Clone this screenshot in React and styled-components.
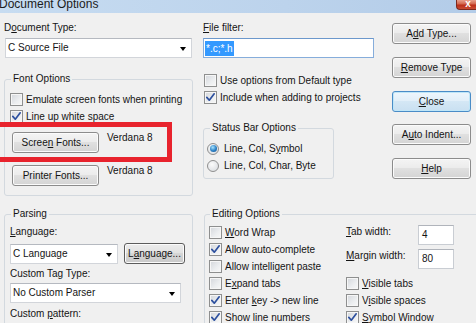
import React from 'react';
import styled, { createGlobalStyle, css } from 'styled-components';

const GlobalStyle = createGlobalStyle`
  *, *::before, *::after { box-sizing: border-box; }
  html, body { margin: 0; padding: 0; background: #f0f0f0; }
  body {
    font-family: "Liberation Sans", Arial, sans-serif;
    font-size: 10px;
    color: #141414;
  }
  #root { width: 476px; height: 323px; overflow: hidden; }
`;

const Window = styled.div`
  position: relative;
  width: 476px;
  height: 323px;
  overflow: hidden;
  background: #f0f0f0;
  display: flex;
  flex-direction: column;
`;

const TitleBar = styled.div`
  flex: none;
  height: 13px;
  display: flex;
  justify-content: space-between;
  align-items: flex-start;
  background: linear-gradient(to right, #c7dcf1, #bcd3ec 60%, #b3cce8);
`;

const Title = styled.div`
  font-size: 12px;
  line-height: 12px;
  margin-top: -2px;
  margin-left: -1px;
  color: #1c1c1c;
`;

const CloseButton = styled.div`
  width: 20px;
  height: 10px;
  border: 1px solid #7d2a1e;
  border-top: none;
  border-right: none;
  border-radius: 0 0 0 4px;
  background: linear-gradient(#e8a08c, #d2664d 45%, #bb2f18 55%, #c94c33);
  color: #fff;
  font-size: 10px;
  font-weight: bold;
  line-height: 8px;
  text-align: center;
  padding-left: 3px;
`;

const Body = styled.div`
  flex: 1;
  padding: 9px 0 0 4px;
  display: flex;
  flex-direction: column;
`;

const TopSection = styled.div`
  display: flex;
  align-items: flex-start;
`;

const Column = styled.div`
  flex: none;
  width: ${(p) => p.$w}px;
  margin-left: ${(p) => p.$ml || 0}px;
  margin-top: ${(p) => p.$mt || 0}px;
  display: flex;
  flex-direction: column;
`;

const Label = styled.div`
  line-height: 12px;
  white-space: nowrap;
  margin-top: ${(p) => p.$mt || 0}px;
  margin-left: ${(p) => p.$ml || 0}px;
`;

const Mn = styled.span`
  text-decoration: underline;
  text-underline-offset: 1px;
`;

const Select = styled.div`
  flex: none;
  width: ${(p) => p.$w}px;
  height: 20px;
  margin-top: ${(p) => p.$mt || 0}px;
  margin-left: ${(p) => p.$ml || 0}px;
  background: #fff;
  border: 1px solid #d2d5da;
  border-top-color: #b5b9c0;
  display: flex;
  align-items: center;
  justify-content: space-between;
  padding: 0 5px 0 2px;
  line-height: 12px;
  white-space: nowrap;
`;

const Arrow = styled.span`
  width: 0;
  height: 0;
  margin-top: 2px;
  border-left: 3.5px solid transparent;
  border-right: 3.5px solid transparent;
  border-top: 4px solid #000;
`;

const TextInput = styled.div`
  flex: none;
  width: ${(p) => p.$w}px;
  height: 20px;
  margin-top: ${(p) => p.$mt || 0}px;
  background: #fff;
  border: 1px solid ${(p) => (p.$focus ? '#86addb' : '#c9cdd3')};
  border-top-color: ${(p) => (p.$focus ? '#6c98cc' : '#b0b4bb')};
  display: flex;
  align-items: center;
  padding-left: ${(p) => p.$pl || 3}px;
  line-height: 12px;
`;

const Selection = styled.span`
  background: #3399ff;
  color: #fff;
  padding: 1px 1px;
  line-height: 13px;
`;

const Button = styled.div`
  flex: none;
  width: ${(p) => p.$w}px;
  height: 21px;
  margin-top: ${(p) => p.$mt || 0}px;
  border: 1px solid #8c8c8c;
  border-radius: 3px;
  background: linear-gradient(#f4f4f4, #ececec 45%, #e0e0e0 50%, #d4d4d4);
  box-shadow: inset 0 0 0 1px #fbfbfb;
  display: flex;
  align-items: center;
  justify-content: center;
  line-height: 12px;
  white-space: nowrap;
  color: #141414;
  ${(p) =>
    p.$default &&
    css`
      border-color: #4a8cc7;
      box-shadow: inset 0 0 0 1px #bfe6f8;
      background: linear-gradient(#eef6fc, #e2eff9 45%, #d4e7f5 50%, #c9e0f1);
    `}
  ${(p) =>
    p.$focus &&
    css`
      border-color: #5c5c5c;
      background: linear-gradient(#ececec, #e2e2e2 45%, #d6d6d6 50%, #c9c9c9);
    `}
`;

const Group = styled.fieldset`
  flex: none;
  margin: 0;
  margin-top: ${(p) => p.$mt || 0}px;
  margin-left: ${(p) => p.$ml || 0}px;
  width: ${(p) => p.$w}px;
  min-width: 0;
  padding: ${(p) => p.$pad};
  border: 1px solid #d3d9df;
  border-radius: 3px;
  display: flex;
  flex-direction: column;
`;

const Legend = styled.legend`
  padding: 0 2px;
  margin-left: ${(p) => p.$ml || 1}px;
  line-height: 12px;
  font-size: 10px;
  color: #141414;
`;

const CheckRow = styled.div`
  display: flex;
  align-items: center;
  gap: 3px;
  height: 17px;
  white-space: nowrap;
  margin-left: ${(p) => p.$ml || 0}px;
  margin-top: ${(p) => p.$mt || 0}px;
`;

const Box = styled.span`
  flex: none;
  width: 13px;
  height: 13px;
  border: 1px solid #8e8f8f;
  background: linear-gradient(135deg, #d3d6db, #eceef0 60%, #f8f8f8);
  box-shadow: inset 0 0 0 1px #f6f6f6;
  display: flex;
  align-items: center;
  justify-content: center;
`;

const RadioDot = styled.span`
  flex: none;
  width: 12px;
  height: 12px;
  margin-right: 2px;
  border-radius: 50%;
  border: 1px solid #8f8f8f;
  background: radial-gradient(circle at 40% 35%, #fbfbfb, #d6d9dd);
  display: flex;
  align-items: center;
  justify-content: center;
  ${(p) =>
    p.$on &&
    css`
      &::after {
        content: '';
        width: 7px;
        height: 7px;
        border-radius: 50%;
        background: radial-gradient(circle at 40% 35%, #a8e4ff, #2a7fc4 55%, #144f8c);
      }
    `}
`;

const FontRow = styled.div`
  display: flex;
  align-items: flex-start;
  gap: 8px;
  margin-left: 2px;
  margin-top: ${(p) => p.$mt || 0}px;
  white-space: nowrap;
  line-height: 12px;
`;

const BottomSection = styled.div`
  display: flex;
  align-items: flex-start;
  margin-top: 12px;
`;

const FieldRow = styled.div`
  display: flex;
  gap: ${(p) => p.$gap || 6}px;
  align-items: ${(p) => p.$align || 'center'};
  margin-top: ${(p) => p.$mt || 0}px;
`;

const EditingGrid = styled.div`
  display: grid;
  grid-template-columns: 137px 130px;
  align-items: start;
`;

const SubColumn = styled.div`
  display: flex;
  flex-direction: column;
`;

const WidthLabel = styled.div`
  width: 66px;
  padding-top: 1px;
  line-height: 12px;
  white-space: nowrap;
`;

const Highlight = styled.div`
  position: absolute;
  left: -10px;
  top: 122px;
  width: 182px;
  height: 40px;
  border: 5px solid #e8232d;
  pointer-events: none;
`;

const CheckMark = () => (
  <svg width="11" height="11" viewBox="0 0 11 11">
    <path d="M1.8 5.4 L4.3 8.2 L9.2 1.8" fill="none" stroke="#2c4f9e" strokeWidth="1.7" strokeLinecap="round" strokeLinejoin="round" />
  </svg>
);

const Check = ({ checked, children, ml, mt }) => (
  <CheckRow $ml={ml} $mt={mt}>
    <Box>{checked && <CheckMark />}</Box>
    <span>{children}</span>
  </CheckRow>
);

const Radio = ({ on, children }) => (
  <CheckRow>
    <RadioDot $on={on} />
    <span>{children}</span>
  </CheckRow>
);

export default function App() {
  return (
    <>
      <GlobalStyle />
      <Window>
        <TitleBar>
          <Title>Document Options</Title>
          <CloseButton>x</CloseButton>
        </TitleBar>
        <Body>
          <TopSection>
            <Column $w={189}>
              <Label>
                D<Mn>o</Mn>cument Type:
              </Label>
              <Select $w={187} $mt={4} $ml={1}>
                <span>C Source File</span>
                <Arrow />
              </Select>
              <Group $w={189} $mt={15} $pad="6px 0 9px 5px">
                <Legend>Font Options</Legend>
                <Check>Emulate screen fonts when printing</Check>
                <Check checked>Line up white space</Check>
                <FontRow $mt={7}>
                  <Button $w={87}>
                    <span>
                      Scree<Mn>n</Mn> Fonts...
                    </span>
                  </Button>
                  <span>Verdana 8</span>
                </FontRow>
                <FontRow $mt={12}>
                  <Button $w={87}>Printer Fonts...</Button>
                  <span>Verdana 8</span>
                </FontRow>
              </Group>
            </Column>

            <Column $w={171} $ml={10}>
              <Label>
                <Mn>F</Mn>ile filter:
              </Label>
              <TextInput $w={171} $mt={4} $focus $pl={1}>
                <Selection>*.c;*.h</Selection>
              </TextInput>
              <Check ml={1} mt={14}>Use options from Default type</Check>
              <Check ml={1} checked>Include when adding to projects</Check>
              <Group $w={131} $mt={16} $pad="6px 0 4px 3px">
                <Legend $ml={3}>Status Bar Options</Legend>
                <Radio on>
                  Line, Col, S<Mn>y</Mn>mbol
                </Radio>
                <Radio>Line, Col, Char, Byte</Radio>
              </Group>
            </Column>

            <Column $w={79} $ml={18} $mt={1}>
              <Button $w={79}>
                <span>
                  A<Mn>d</Mn>d Type...
                </span>
              </Button>
              <Button $w={79} $mt={13}>
                <span>
                  <Mn>R</Mn>emove Type
                </span>
              </Button>
              <Button $w={79} $mt={13} $default>
                <span>
                  <Mn>C</Mn>lose
                </span>
              </Button>
              <Button $w={79} $mt={12}>
                <span>
                  A<Mn>u</Mn>to Indent...
                </span>
              </Button>
              <Button $w={79} $mt={13}>
                <span>
                  <Mn>H</Mn>elp
                </span>
              </Button>
            </Column>
          </TopSection>

          <BottomSection>
            <Group $w={189} $pad="6px 0 20px 5px">
              <Legend>Parsing</Legend>
              <Label>
                <Mn>L</Mn>anguage:
              </Label>
              <FieldRow $mt={5} $gap={6}>
                <Select $w={108}>
                  <span>C Language</span>
                  <Arrow />
                </Select>
                <Button $w={61} $focus>
                  <span>
                    L<Mn>a</Mn>nguage...
                  </span>
                </Button>
              </FieldRow>
              <Label $mt={4}>Custom Tag Type:</Label>
              <Select $w={171} $mt={3}>
                <span>No Custom Parser</span>
                <Arrow />
              </Select>
              <Label $mt={5}>
                Custom <Mn>p</Mn>attern:
              </Label>
            </Group>

            <Group $w={290} $ml={11} $pad="4px 0 10px 4px">
              <Legend>Editing Options</Legend>
              <EditingGrid>
                <SubColumn>
                  <Check>
                    <Mn>W</Mn>ord Wrap
                  </Check>
                  <Check checked>Allow auto-complete</Check>
                  <Check>Allow intelligent paste</Check>
                  <Check>
                    E<Mn>x</Mn>pand tabs
                  </Check>
                  <Check checked>
                    Enter <Mn>k</Mn>ey -&gt; new line
                  </Check>
                  <Check checked>Show line numbers</Check>
                </SubColumn>
                <SubColumn>
                  <FieldRow $mt={1} $gap={0} $align="flex-start">
                    <WidthLabel>
                      <Mn>T</Mn>ab width:
                    </WidthLabel>
                    <TextInput $w={36}>4</TextInput>
                  </FieldRow>
                  <FieldRow $mt={4} $gap={0} $align="flex-start">
                    <WidthLabel>
                      <Mn>M</Mn>argin width:
                    </WidthLabel>
                    <TextInput $w={36}>80</TextInput>
                  </FieldRow>
                  <Check mt={6}>
                    <Mn>V</Mn>isible tabs
                  </Check>
                  <Check>
                    V<Mn>i</Mn>sible spaces
                  </Check>
                  <Check checked>
                    <Mn>S</Mn>ymbol Window
                  </Check>
                </SubColumn>
              </EditingGrid>
            </Group>
          </BottomSection>
        </Body>
        <Highlight />
      </Window>
    </>
  );
}
